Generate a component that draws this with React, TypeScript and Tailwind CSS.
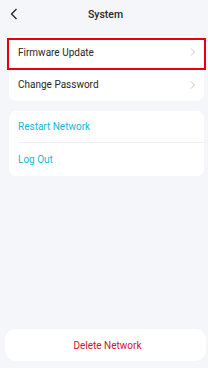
import React from 'react';

const font = { fontFamily: 'Roboto, "Liberation Sans", sans-serif' };

const Chevron: React.FC = () => (
  <svg width="6" height="8" viewBox="0 0 6 8" fill="none" className="shrink-0">
    <path d="M1 0.5L4.5 4L1 7.5" stroke="#c4c4c4" strokeWidth="1" />
  </svg>
);

const App: React.FC = () => {
  return (
    <div className="w-[208px] h-[368px] bg-[#f4f6fa] flex flex-col text-[#262626]" style={font}>
      {/* header */}
      <div className="relative h-[36px] flex items-center justify-center">
        <svg width="8" height="12" viewBox="0 0 8 12" fill="none" className="absolute left-[10px] top-[8px]">
          <path d="M6.5 1L1.5 6L6.5 11" stroke="#222" strokeWidth="1.3" />
        </svg>
        <span className="text-[10.5px] font-medium pl-[3px] -mt-[7px]">System</span>
      </div>

      <div className="ml-[9px] mr-[4px] bg-white rounded-[7px] flex flex-col">
        <div className="relative h-[32.5px] flex items-center justify-between pl-[9px] pr-[8px]">
          <span className="text-[10px]">Firmware Update</span>
          <Chevron />
          <div className="absolute -left-[2px] -right-[2px] top-[2px] -bottom-[1px] border-2 border-[#e6000f]" />
        </div>
        <div className="h-[32.5px] flex items-center justify-between pl-[9px] pr-[8px]">
          <span className="text-[10px]">Change Password</span>
          <Chevron />
        </div>
      </div>

      <div className="ml-[9px] mr-[4px] mt-[10px] bg-white rounded-[7px] flex flex-col pl-[9px]">
        <div className="h-[32px] flex items-center border-b border-[#eef0f3]">
          <span className="text-[10px] text-[#17b8d3]">Restart Network</span>
        </div>
        <div className="h-[33px] flex items-center">
          <span className="text-[10px] text-[#17b8d3]">Log Out</span>
        </div>
      </div>

      <div className="flex-1" />

      <div className="ml-[5px] mr-[2px] mb-[7px] h-[32px] bg-white rounded-[11px] flex items-center justify-center">
        <span className="text-[10px] text-[#d0112e] pl-[4px]">Delete Network</span>
      </div>
    </div>
  );
};

export default App;
